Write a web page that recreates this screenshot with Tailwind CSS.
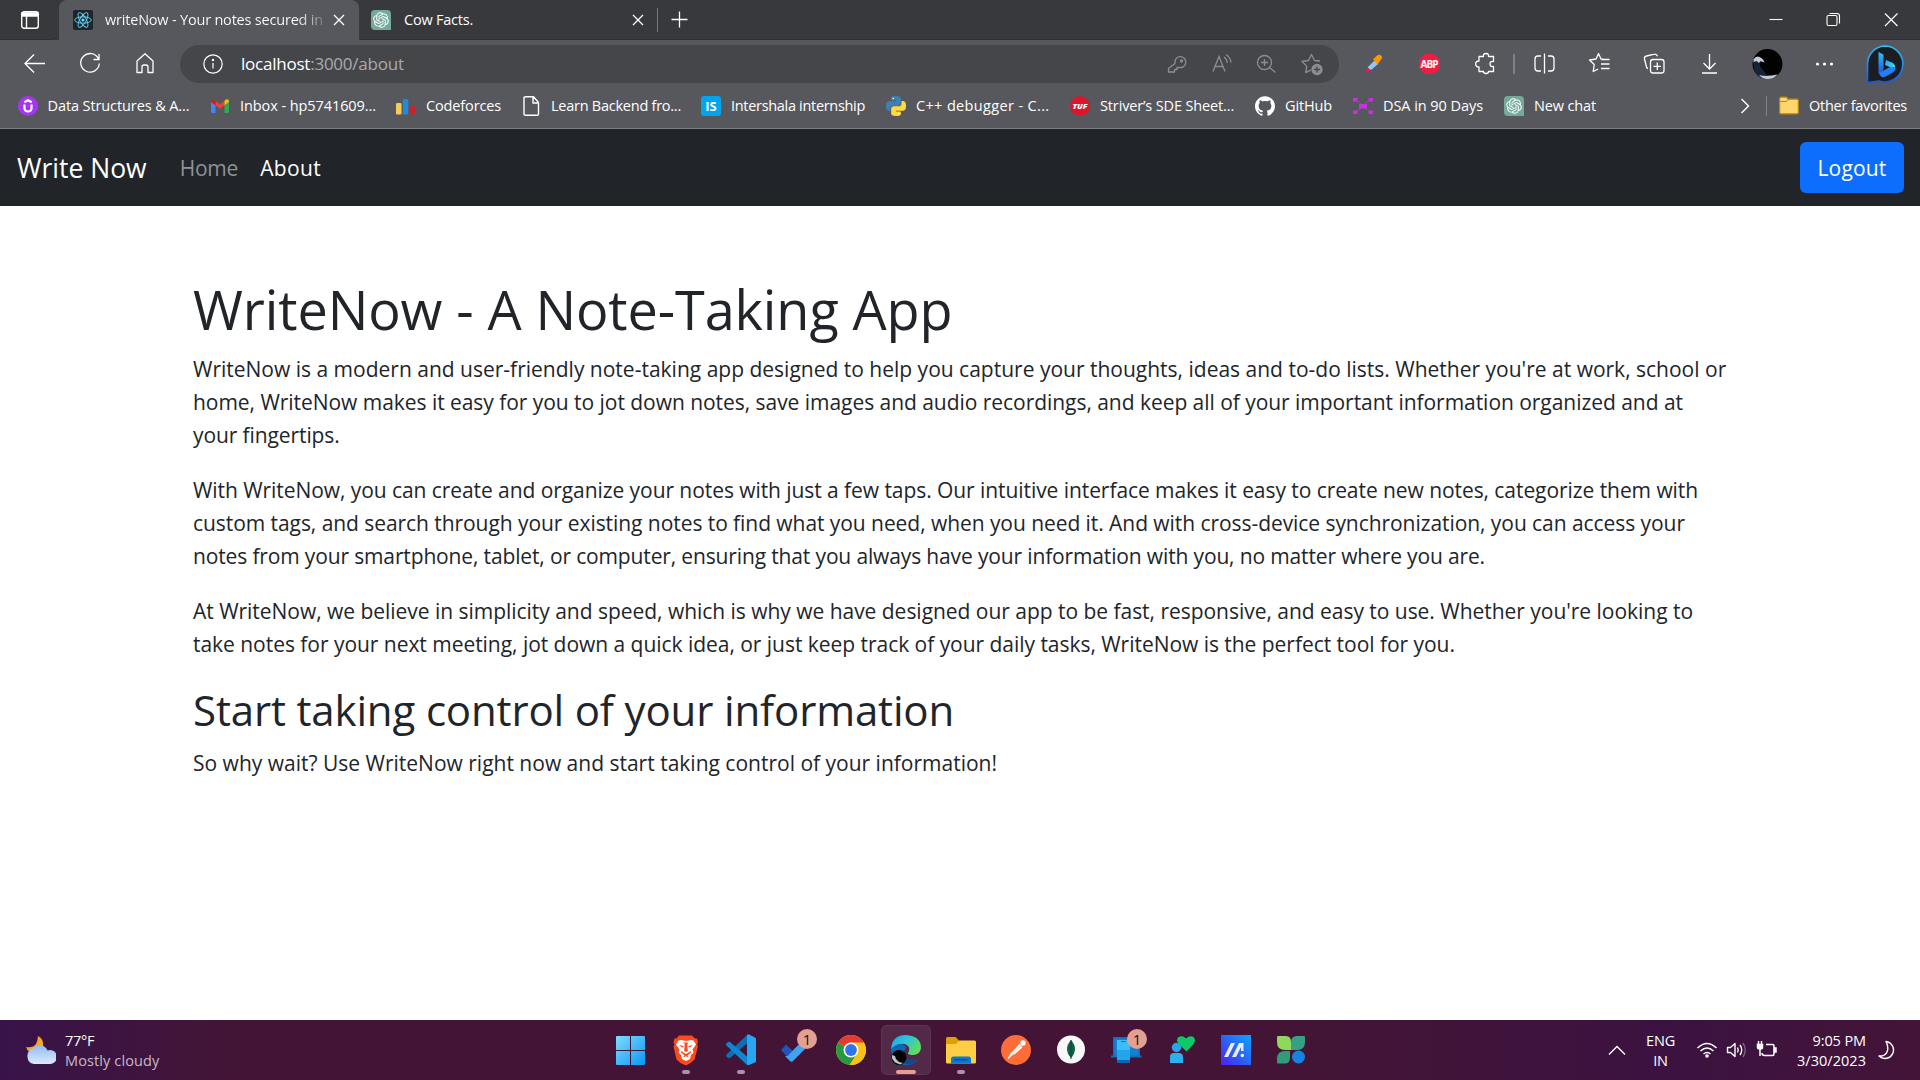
<!DOCTYPE html>
<html lang="en">
<head>
<meta charset="utf-8">
<title>writeNow - Your notes secured in the cloud</title>
<script src="https://cdn.jsdelivr.net/npm/@tailwindcss/browser@4"></script>
</head>
<body class="flex h-screen w-screen flex-col overflow-hidden bg-white font-['Open_Sans','Noto_Sans',sans-serif] text-[14.5px] text-white">

<svg class="hidden">
  <symbol id="gpt" viewBox="0 0 20 20">
    <path d="M4 0h12q4 0 4 4v16H4q-4 0-4-4V4q0-4 4-4z" fill="#74a99b"/>
    <path transform="translate(2.2 2.2) scale(.65)" fill="#fff" d="M22.2819 9.8211a5.9847 5.9847 0 0 0-.5157-4.9108 6.0462 6.0462 0 0 0-6.5098-2.9A6.0651 6.0651 0 0 0 4.9807 4.1818a5.9847 5.9847 0 0 0-3.9977 2.9 6.0462 6.0462 0 0 0 .7427 7.0966 5.98 5.98 0 0 0 .511 4.9107 6.051 6.051 0 0 0 6.5146 2.9001A5.9847 5.9847 0 0 0 13.2599 24a6.0557 6.0557 0 0 0 5.7718-4.2058 5.9894 5.9894 0 0 0 3.9977-2.9001 6.0557 6.0557 0 0 0-.7475-7.0729zm-9.022 12.6081a4.4755 4.4755 0 0 1-2.8764-1.0408l.1419-.0804 4.7783-2.7582a.7948.7948 0 0 0 .3927-.6813v-6.7369l2.02 1.1686a.071.071 0 0 1 .038.052v5.5826a4.504 4.504 0 0 1-4.4945 4.4944zm-9.6607-4.1254a4.4708 4.4708 0 0 1-.5346-3.0137l.142.0852 4.783 2.7582a.7712.7712 0 0 0 .7806 0l5.8428-3.3685v2.3324a.0804.0804 0 0 1-.0332.0615L9.74 19.9502a4.4992 4.4992 0 0 1-6.1408-1.6464zM2.3408 7.8956a4.485 4.485 0 0 1 2.3655-1.9728V11.6a.7664.7664 0 0 0 .3879.6765l5.8144 3.3543-2.0201 1.1685a.0757.0757 0 0 1-.071 0l-4.8303-2.7865A4.504 4.504 0 0 1 2.3408 7.872zm16.5963 3.8558L13.1038 8.364 15.1192 7.2a.0757.0757 0 0 1 .071 0l4.8303 2.7913a4.4944 4.4944 0 0 1-.6765 8.1042v-5.6772a.79.79 0 0 0-.407-.667zm2.0107-3.0231l-.142-.0852-4.7735-2.7818a.7759.7759 0 0 0-.7854 0L9.409 9.2297V6.8974a.0662.0662 0 0 1 .0284-.0615l4.8303-2.7866a4.4992 4.4992 0 0 1 6.6802 4.66zM8.3065 12.863l-2.02-1.1638a.0804.0804 0 0 1-.038-.0567V6.0742a4.4992 4.4992 0 0 1 7.3757-3.4537l-.142.0805L8.704 5.459a.7948.7948 0 0 0-.3927.6813zm1.0976-2.3654l2.602-1.4998 2.6069 1.4998v2.9994l-2.5974 1.4997-2.6067-1.4997Z"/>
  </symbol>
</svg>

<!-- Tab strip -->
<header class="flex h-10 shrink-0 items-center bg-[#38393c]">
  <div class="flex h-10 w-[59px] shrink-0 items-center justify-center rounded-br-lg border-b border-[#2e2f32]">
    <svg class="size-5" viewBox="0 0 20 20" fill="none" stroke="#fff" stroke-width="1.4"><rect x="1.7" y="1.7" width="16.6" height="16.6" rx="2.5"/><path d="M2 3h16v3H2z" fill="#fff"/><path d="M6.5 6v12"/></svg>
  </div>
  <div class="flex h-10 w-[300px] shrink-0 items-center rounded-t-lg bg-[#57585d] pl-[14px]">
    <svg class="size-5 shrink-0" viewBox="0 0 20 20"><rect width="20" height="20" rx="2" fill="#20232a"/><g fill="none" stroke="#61dafb" stroke-width=".9"><ellipse cx="10" cy="10" rx="8.3" ry="3.2"/><ellipse cx="10" cy="10" rx="8.3" ry="3.2" transform="rotate(60 10 10)"/><ellipse cx="10" cy="10" rx="8.3" ry="3.2" transform="rotate(120 10 10)"/></g><circle cx="10" cy="10" r="1.6" fill="#61dafb"/></svg>
    <span class="ml-3 w-[219px] overflow-hidden whitespace-nowrap bg-linear-to-r from-white from-88% to-white/20 bg-clip-text tracking-[-0.2px] text-transparent">writeNow - Your notes secured in</span>
    <svg class="ml-[9px] size-3 shrink-0" viewBox="0 0 12 12" stroke="#fff" stroke-width="1.3"><path d="M1 1l10 10M11 1L1 11"/></svg>
  </div>
  <div class="flex h-10 w-[298px] shrink-0 items-center border-b border-[#2e2f32] pl-3">
    <svg class="size-5 shrink-0"><use href="#gpt"/></svg>
    <span class="ml-[13px] flex-1 tracking-[-0.22px]">Cow Facts.</span>
    <svg class="mr-[13px] size-3" viewBox="0 0 12 12" stroke="#fff" stroke-width="1.3"><path d="M1 1l10 10M11 1L1 11"/></svg>
  </div>
  <div class="flex h-10 flex-1 items-center border-b border-[#2e2f32]">
    <div class="h-6 w-px bg-[#77787b]"></div>
    <svg class="ml-[13px] size-[17px]" viewBox="0 0 17 17" stroke="#fff" stroke-width="1.3"><path d="M8.5 .5v16M.5 8.5h16"/></svg>
    <div class="ml-auto flex text-white">
      <svg class="h-10 w-[57px]" viewBox="0 0 57 40" stroke="#fff" stroke-width="1.1"><path d="M21.5 19.5h13"/></svg>
      <svg class="h-10 w-[58px]" viewBox="0 0 58 40" fill="none" stroke="#fff" stroke-width="1.1"><rect x="22" y="15.5" width="10" height="10" rx="1.5"/><path d="M24.5 13.5h7.500q2.500 0 2.500 2.500v7.500"/></svg>
      <svg class="h-10 w-[57px]" viewBox="0 0 57 40" stroke="#fff" stroke-width="1.2"><path d="M22 13.500l12.500 12.500M34.500 13.500L22 26"/></svg>
    </div>
  </div>
</header>

<!-- Toolbar -->
<div class="flex h-12 shrink-0 items-center bg-[#57585d] pl-2">
  <svg class="h-12 w-[55px] shrink-0" viewBox="0 0 55 48" fill="none" stroke="#fff" stroke-width="1.3"><path d="M37 23.500H17.500M26 14.500l-9 9 9 9"/></svg>
  <svg class="h-12 w-[55px] shrink-0" viewBox="0 0 55 48" fill="none" stroke="#fff" stroke-width="1.3"><path d="M35.500 19A9.300 9.300 0 1 0 36.300 23.500M36 14v5.500h-5.500"/></svg>
  <svg class="h-12 w-[55px] shrink-0" viewBox="0 0 55 48" fill="none" stroke="#fff" stroke-width="1.3" stroke-linejoin="round"><path d="M19 21l8-7.300L35 21v11.500h-5V27q0-2-2-2h-2q-2 0-2 2v5.500h-5z"/></svg>
  <div class="ml-[7px] flex h-[38px] w-[1159px] shrink-0 items-center rounded-full bg-[#45464a] pl-[23px] pr-[7px]">
    <svg class="size-5" viewBox="0 0 20 20" fill="none" stroke="#fff" stroke-width="1.2"><circle cx="10" cy="10" r="9.200"/><path d="M10 9v5.500"/><circle cx="10" cy="6" r=".6" fill="#fff"/></svg>
    <span class="ml-[18px] flex-1 text-[17px] tracking-[-0.23px] text-[#a9aaac]"><span class="text-white">localhost</span>:3000/about</span>
    <svg class="h-8 w-[45px]" viewBox="0 0 45 32" fill="none" stroke="#8d8e91" stroke-width="1.3" stroke-linejoin="round"><path d="M21 15.500a5.500 5.500 0 1 1 4 4l-2 0v2h-2.500v2.500H14.500v-3.500z"/><circle cx="27.500" cy="13" r="1"/></svg>
    <svg class="h-8 w-[45px]" viewBox="0 0 45 32" fill="none" stroke="#8d8e91" stroke-width="1.3"><path d="M14 23.500l6-15 6 15M16 18.500h8M25 9q3 2 3.200 6M27 6.500q4.500 3 5 8"/></svg>
    <svg class="h-8 w-[45px]" viewBox="0 0 45 32" fill="none" stroke="#8d8e91" stroke-width="1.3"><circle cx="20.500" cy="14.500" r="7"/><path d="M25.500 19.500l6 5M17 14.500h7M20.500 11v7"/></svg>
    <svg class="h-8 w-[43px]" viewBox="0 0 43 32" fill="none" stroke="#8d8e91" stroke-width="1.3" stroke-linejoin="round"><path d="M31 13l-5.500-.5L22.500 6.500l-3 6-6.500 1 4.700 4.600-1 6.500 5.300-2.700"/><circle cx="28" cy="21.500" r="5" fill="#8d8e91"/><path d="M25 21.500h6M28 18.500v6" stroke="#45464a"/></svg>
  </div>
  <svg class="ml-2 h-12 w-[55px] shrink-0" viewBox="0 0 55 48"><g transform="translate(0 1)"><path d="M18.500 31.500l2.500-6 3 3-4 3z" fill="#e6175c"/><path d="M20.500 26.500l7-7 3.500 3.500-7 6z" fill="#90c8f5"/><path d="M20.500 26.500l3.500 3.500-4.500 1.500z" fill="#e6175c"/><path d="M26 18l1.500-1 2-2q3-2.500 5 0 1.500 2-1 4l-1.500 2.500-1.500 2z" fill="#ff9800"/></g></svg>
  <svg class="h-12 w-[55px] shrink-0" viewBox="0 0 55 48"><path d="M23 14h9l5.500 5.500v9L32 34h-9L17.500 28.500v-9z" fill="#ed1e45"/><text x="27.500" y="27.800" text-anchor="middle" font-size="10" font-weight="700" fill="#fff" textLength="18">ABP</text></svg>
  <svg class="h-12 w-[56px] shrink-0" viewBox="0 0 56 48" fill="none" stroke="#fff" stroke-width="1.3" stroke-linejoin="round"><path d="M22 16.500h4.500q-.5-3 2.500-3t2.500 3H36.500v5q-3.500-.5-3.500 2.500t3.500 2.500V31.500H31.500q0 2-2.500 2t-2.500-2H22V27q-3.300 0-3.300-3t3.300-3z"/></svg>
  <div class="h-5 w-0.5 shrink-0 bg-[#808184]"></div>
  <svg class="ml-0.5 h-12 w-[55px] shrink-0" viewBox="0 0 55 48" fill="none" stroke="#fff" stroke-width="1.3"><path d="M24 16h-3q-3 0-3 3v9q0 3 3 3h3M31 16h3q3 0 3 3v9q0 3-3 3h-3M27.500 13.500v20"/></svg>
  <svg class="h-12 w-[55px] shrink-0" viewBox="0 0 55 48" fill="none" stroke="#fff" stroke-width="1.3" stroke-linejoin="round"><path d="M32 19.500l-3-.5-2.500-5.500L24 19l-6.500 1 4.700 4.500-1 7 5-2.500M29.500 19.500H37.500M29 24h8.500M29 28.500h8.500"/></svg>
  <svg class="h-12 w-[55px] shrink-0" viewBox="0 0 55 48" fill="none" stroke="#fff" stroke-width="1.3" stroke-linejoin="round"><rect x="23.500" y="19.500" width="13.500" height="13.500" rx="2.500"/><path d="M30.300 22.500v7.500M26.500 26.300h7.500M21 28.500q-1 0-1.500-1.500L17.500 19q-.5-2.500 2-3l8-1.800q2-.5 3 2"/></svg>
  <svg class="h-12 w-[55px] shrink-0" viewBox="0 0 55 48" fill="none" stroke="#fff" stroke-width="1.3"><path d="M27.500 14v15M21.500 23l6 6 6-6M20 33h15"/></svg>
  <svg class="ml-[3px] h-12 w-[55px] shrink-0" viewBox="0 0 55 48"><circle cx="27.500" cy="24" r="15" fill="#020203"/><path d="M13 21q3-5 6-3.500 4 2 3.500 5-2-1-3 1 1 5 4 7l3 4q6 2 11-.500-4 5-10 5-9 0-13-8-1-4-1.500-10z" fill="#17233b"/><path d="M13.500 19.500q2.500-4 6-2.500 4 1.500 5 5.500l-4-1.500-1.500 2-2.500-2-3 1zM19 35q8 2 18.500-.500-4 4.500-10 4.500-5 0-8.500-4z" fill="#c3ccd4"/></svg>
  <svg class="ml-0.5 h-12 w-[55px] shrink-0" viewBox="0 0 55 48" fill="#fff"><circle cx="20.500" cy="24" r="1.600"/><circle cx="27.500" cy="24" r="1.600"/><circle cx="34.500" cy="24" r="1.600"/></svg>
  <svg class="ml-[5px] h-12 w-[55px] shrink-0" viewBox="0 0 55 48"><defs><linearGradient id="bg1" x1="0" y1="0" x2="0" y2="1"><stop offset="0" stop-color="#2fc0f2"/><stop offset="1" stop-color="#1d55dd"/></linearGradient><linearGradient id="bg2" x1="0" y1="0" x2="1" y2="1"><stop offset="0" stop-color="#22a5fa"/><stop offset="1" stop-color="#3fe0e4"/></linearGradient></defs><path d="M28.500 6a18 18 0 1 1-6.500 35q-6 1-11.500 1.500V24A18 18 0 0 1 28.500 6z" fill="#1b1d22" stroke="url(#bg1)" stroke-width="1.700"/><path d="M21.500 12l5 2.500v15.500l-4.500 4q-.5 0-.5-4z" fill="url(#bg1)"/><path d="M29 20l7 3q3 2 2 6l-10-4z" fill="url(#bg2)"/><path d="M22 33l11-6 5 0q1 4-3 6l-7.500 4q-4 1-5.500-4z" fill="#237ff3"/></svg>
</div>

<!-- Favourites bar -->
<div class="flex h-[41px] shrink-0 items-center whitespace-nowrap border-b border-[#7d7e81] bg-[#57585d] pb-1 pl-[18px]">
  <div class="flex w-48 shrink-0 items-center gap-[9.5px]">
    <svg class="size-5" viewBox="0 0 20 20"><circle cx="10" cy="10" r="10" fill="#a435f0"/><path d="M6.500 8.500v4a3.500 3 0 0 0 7 0v-4M6.300 6.300L10 4.200l3.700 2.100" fill="none" stroke="#fff" stroke-width="2.200"/></svg>
    <span class="tracking-[-0.1px]">Data Structures &amp; A...</span>
  </div>
  <div class="flex w-[185px] shrink-0 items-center gap-2.5">
    <svg class="size-5" viewBox="0 0 20 20"><path d="M1 5.500l4.500 3.300V17H2.500Q1 17 1 15.500z" fill="#4285f4"/><path d="M19 5.500l-4.500 3.300V17h3q1.500 0 1.500-1.500z" fill="#34a853"/><path d="M5.500 4.800L10 8.300l4.500-3.500v4.500L10 12.800 5.500 9.300z" fill="#ea4335"/><path d="M1 5.700Q1 3 3.500 3.300l2 1.500v4.500L1 6z" fill="#c5221f"/><path d="M19 5.700Q19 3 16.500 3.300l-2 1.500v4.500L19 6z" fill="#fbbc04"/></svg>
    <span class="tracking-[-0.08px]">Inbox - hp5741609...</span>
  </div>
  <div class="flex w-[127px] shrink-0 items-center gap-[11px]">
    <svg class="size-5" viewBox="0 0 20 20"><rect x="1" y="7" width="5.500" height="11.500" rx="1.200" fill="#f9cb52"/><rect x="7.800" y="3" width="5.500" height="15.500" rx="1.200" fill="#1f8dd6"/><rect x="14.600" y="9.500" width="5.400" height="9" rx="1.200" fill="#c62430"/></svg>
    <span class="tracking-[-0.14px]">Codeforces</span>
  </div>
  <div class="flex w-[179px] shrink-0 items-center gap-[9px]">
    <svg class="size-5" viewBox="0 0 20 20" fill="none" stroke="#fff" stroke-width="1.4" stroke-linejoin="round"><path d="M4 .8h7.500L16.500 6.500V18q0 1.300-1.300 1.300H3.500Q2 19.300 2 18V2Q2 .8 3.500 .8zM11 1v6h5.500"/></svg>
    <span class="tracking-[-0.25px]">Learn Backend fro...</span>
  </div>
  <div class="flex w-[185px] shrink-0 items-center gap-2.5">
    <svg class="size-5" viewBox="0 0 20 20"><rect width="20" height="20" rx="3" fill="#00a5ec"/><text x="10" y="15" text-anchor="middle" font-size="13" font-weight="700" fill="#fff">IS</text></svg>
    <span class="tracking-[-0.31px]">Intershala internship</span>
  </div>
  <div class="flex w-[184px] shrink-0 items-center gap-2.5">
    <svg class="size-5" viewBox="0 0 24 24"><path fill="#3d7fb5" d="M14.250.18l.9.2.73.26.59.3.45.32.34.34.25.34.16.33.1.3.04.26.02.2-.01.13V8.500l-.05.63-.13.55-.21.46-.26.38-.3.31-.33.25-.35.19-.35.14-.33.1-.3.07-.26.04-.21.02H8.770l-.69.05-.59.14-.5.22-.41.27-.33.32-.27.35-.2.36-.15.37-.1.35-.07.32-.04.27-.02.21v3.060H3.170l-.21-.03-.28-.07-.32-.12-.35-.18-.36-.26-.36-.36-.35-.46-.32-.59-.28-.73-.21-.88-.14-1.050-.05-1.230.06-1.220.16-1.040.24-.87.32-.71.36-.57.4-.44.42-.33.42-.24.4-.16.36-.1.32-.05.24-.01h.16l.06.01h8.160v-.83H6.180l-.01-2.750-.02-.37.05-.34.11-.31.17-.28.25-.26.31-.23.38-.2.44-.18.51-.15.58-.12.64-.1.71-.06.77-.04.84-.02 1.270.05z"/><path transform="rotate(180 12 12)" fill="#ffd83f" d="M14.250.18l.9.2.73.26.59.3.45.32.34.34.25.34.16.33.1.3.04.26.02.2-.01.13V8.500l-.05.63-.13.55-.21.46-.26.38-.3.31-.33.25-.35.19-.35.14-.33.1-.3.07-.26.04-.21.02H8.770l-.69.05-.59.14-.5.22-.41.27-.33.32-.27.35-.2.36-.15.37-.1.35-.07.32-.04.27-.02.21v3.060H3.170l-.21-.03-.28-.07-.32-.12-.35-.18-.36-.26-.36-.36-.35-.46-.32-.59-.28-.73-.21-.88-.14-1.050-.05-1.230.06-1.220.16-1.040.24-.87.32-.71.36-.57.4-.44.42-.33.42-.24.4-.16.36-.1.32-.05.24-.01h.16l.06.01h8.160v-.83H6.180l-.01-2.750-.02-.37.05-.34.11-.31.17-.28.25-.26.31-.23.38-.2.44-.18.51-.15.58-.12.64-.1.71-.06.77-.04.84-.02 1.270.05z"/><circle cx="8.700" cy="3" r="1" fill="#fff"/><circle cx="15.300" cy="21" r="1" fill="#fff"/></svg>
    <span class="tracking-[0.35px]">C++ debugger - C...</span>
  </div>
  <div class="flex w-[185px] shrink-0 items-center gap-2.5">
    <svg class="size-5" viewBox="0 0 20 20"><circle cx="10" cy="10" r="10" fill="#d9162b"/><text x="10" y="12.800" text-anchor="middle" font-size="7.500" font-weight="800" font-style="italic" fill="#fff" textLength="15" lengthAdjust="spacingAndGlyphs">TUF</text></svg>
    <span class="tracking-[-0.14px]">Striver’s SDE Sheet...</span>
  </div>
  <div class="flex w-[98px] shrink-0 items-center gap-2.5">
    <svg class="size-5" viewBox="0 0 24 24" fill="#fff"><path d="M12 .297c-6.630 0-12 5.373-12 12 0 5.303 3.438 9.800 8.205 11.385.6.113.82-.258.82-.577 0-.285-.01-1.040-.015-2.040-3.338.724-4.042-1.610-4.042-1.610C4.422 18.070 3.633 17.700 3.633 17.700c-1.087-.744.084-.729.084-.729 1.205.084 1.838 1.236 1.838 1.236 1.070 1.835 2.809 1.305 3.495.998.108-.776.417-1.305.76-1.605-2.665-.3-5.466-1.332-5.466-5.930 0-1.310.465-2.380 1.235-3.220-.135-.303-.54-1.523.105-3.176 0 0 1.005-.322 3.300 1.230.96-.267 1.980-.399 3-.405 1.020.006 2.040.138 3 .405 2.280-1.552 3.285-1.230 3.285-1.230.645 1.653.24 2.873.12 3.176.765.84 1.230 1.910 1.230 3.220 0 4.610-2.805 5.625-5.475 5.920.42.36.81 1.096.81 2.220 0 1.606-.015 2.896-.015 3.286 0 .315.21.69.825.57C20.565 22.092 24 17.592 24 12.297c0-6.627-5.373-12-12-12"/></svg>
    <span class="tracking-[-0.14px]">GitHub</span>
  </div>
  <div class="flex w-[151px] shrink-0 items-center gap-2.5">
    <svg class="size-5" viewBox="0 0 20 20"><path d="M2 4q4 1 8 6t8 6M18 4q-4 1-8 6t-8 6" fill="none" stroke="#8c4a9e" stroke-width="1"/><g fill="#c931df"><rect x="0" y="2" width="4.500" height="3.500"/><rect x="15.500" y="2" width="4.500" height="3.500"/><rect x="0" y="14.500" width="4.500" height="3.500"/><rect x="15.500" y="14.500" width="4.500" height="3.500"/><rect x="6" y="8" width="8" height="4.500"/></g></svg>
    <span class="tracking-[-0.06px]">DSA in 90 Days</span>
  </div>
  <div class="flex shrink-0 items-center gap-2.5">
    <svg class="size-5"><use href="#gpt"/></svg>
    <span class="tracking-[-0.14px]">New chat</span>
  </div>
  <div class="ml-auto flex items-center pr-[13px]">
    <svg class="h-4 w-2.5" viewBox="0 0 10 16" fill="none" stroke="#fff" stroke-width="1.400"><path d="M1.500 1l7 7-7 7"/></svg>
    <div class="ml-4 h-5 w-px bg-[#808184]"></div>
    <svg class="ml-3 size-5" viewBox="0 0 20 20"><path d="M.7 4V2.500Q.7 1.200 2 1.200h5.500l1.500 2H18q1.300 0 1.300 1.300v12q0 1.300-1.300 1.300H2Q.7 17.800.7 16.500z" fill="#ffd66b" stroke="#b98a16" stroke-width="1.200"/><path d="M1 5.500h6.500l1.500-2" fill="none" stroke="#b98a16"/></svg>
    <span class="ml-2.5 tracking-[-0.26px]">Other favorites</span>
  </div>
</div>

<!-- Site navbar -->
<nav class="flex h-[77px] shrink-0 items-center bg-[#212529] pl-[17px] pr-4 text-[21px]">
  <a class="pt-0.5 text-[26.5px]">Write Now</a>
  <a class="ml-[33px] pt-0.5 tracking-[-0.2px] text-[#909294]">Home</a>
  <a class="ml-[22px] pt-0.5 tracking-[0.37px]">About</a>
  <button class="ml-auto h-[51px] w-[104px] rounded-md bg-[#0d6efd] pt-0.5 tracking-[0.17px]">Logout</button>
</nav>

<!-- Page -->
<main class="flex-1 whitespace-nowrap pl-[193px] pt-[70px] text-[21px] leading-[33px] text-[#212529]">
  <h1 class="mb-[11px] text-[54px] leading-[66px] tracking-[-0.1px]">WriteNow - A Note-Taking App</h1>
  <p class="mb-[22px]">
    <span class="block">WriteNow is a modern and user-friendly note-taking app designed to help you capture your thoughts, ideas and to-do lists. Whether you're at work, school or</span>
    <span class="block tracking-[-0.042px]">home, WriteNow makes it easy for you to jot down notes, save images and audio recordings, and keep all of your important information organized and at</span>
    <span class="block tracking-[-0.1px]">your fingertips.</span>
  </p>
  <p class="mb-[22px]">
    <span class="block tracking-[-0.066px]">With WriteNow, you can create and organize your notes with just a few taps. Our intuitive interface makes it easy to create new notes, categorize them with</span>
    <span class="block tracking-[-0.06px]">custom tags, and search through your existing notes to find what you need, when you need it. And with cross-device synchronization, you can access your</span>
    <span class="block tracking-[-0.143px]">notes from your smartphone, tablet, or computer, ensuring that you always have your information with you, no matter where you are.</span>
  </p>
  <p class="mb-[22px]">
    <span class="block tracking-[-0.03px]">At WriteNow, we believe in simplicity and speed, which is why we have designed our app to be fast, responsive, and easy to use. Whether you're looking to</span>
    <span class="block tracking-[-0.035px]">take notes for your next meeting, jot down a quick idea, or just keep track of your daily tasks, WriteNow is the perfect tool for you.</span>
  </p>
  <h2 class="mb-[11px] text-[42px] leading-[53px] tracking-[-0.15px]">Start taking control of your information</h2>
  <p>So why wait? Use WriteNow right now and start taking control of your information!</p>
</main>

<!-- Taskbar -->
<footer class="flex h-[60px] shrink-0 items-center bg-linear-to-r from-[#38134a] via-[#431436] via-12% to-[#431436] leading-5">
  <div class="flex w-[603px] items-center pl-[25px]">
    <svg class="size-[31px]" viewBox="0 0 31 31"><defs><linearGradient id="cl" x1="0" y1="0" x2="0" y2="1"><stop offset="0" stop-color="#8fbdf5"/><stop offset="1" stop-color="#dde9fb"/></linearGradient></defs><path d="M13 1q6 3 5 10T9 18Q3 18 1 12q7 1 10-3 2-4 2-8z" fill="#f5a42c"/><path d="M9 29a8 8 0 0 1-1-15.500 8.500 8.500 0 0 1 14.500 2A7 7 0 1 1 24 29z" fill="url(#cl)"/></svg>
    <div class="ml-[9px] pt-0.5"><div class="tracking-[-0.3px]">77°F</div><div class="tracking-[0.12px] text-[#c9b9c8]">Mostly cloudy</div></div>
  </div>
  <div class="flex h-[60px] flex-1 items-center">
    <svg class="h-[60px] w-[55px]" viewBox="0 0 55 60"><defs><linearGradient id="wn" x1="0" y1="0" x2="1" y2="1"><stop offset="0" stop-color="#7fdcff"/><stop offset="1" stop-color="#0a96f5"/></linearGradient></defs><path d="M13 17q0-1 1-1h13v14H13zM28 16h13q1 0 1 1v13H28zM13 31h14v14H14q-1 0-1-1zM28 31h14v13q0 1-1 1H28z" fill="url(#wn)"/></svg>
    <svg class="h-[60px] w-[55px]" viewBox="0 0 55 60"><path d="M21 15.500h13l3 3h2l1 4-1 2 1 2-3.500 13-4 3.500L28 45.500 22.500 43l-4-3.500L15.500 26.500l1-2-1-2 1-4h2z" fill="#fb4b1c"/><path d="M20.500 20.500l3-.5 4.500 1 4.500-1 3 .5 2.500 4-3.500 5 1 3-2.500 2.500-1 4-4 2-4-2-1-4-2.500-2.500 1-3-3.500-5z" fill="#fff"/><path d="M21 25l4.500 1v1.500l-2-.5zM35 25l-4.500 1v1.500l2-.5zM25.500 22.500h5l-1.200 1.500.5 7L28 32l-1.800-1 .5-7zM23 31l5 3 5-3v1.500l-3.500 3L31 37.500l-3-1.200-3 1.200 1.500-2-3.500-3z" fill="#fb4b1c"/><rect x="24" y="50" width="8" height="4" rx="2" fill="#a992ad"/></svg>
    <svg class="h-[60px] w-[55px]" viewBox="0 0 55 60"><g transform="translate(-1 0)"><path d="M35 15v8.500L18 38q-1 .5-2 0l-1.500-1.500q-.7-1 0-2z" fill="#0a70b5"/><path d="M35 45v-8.500L18 22q-1-.5-2 0l-1.500 1.500q-.7 1 0 2z" fill="#0f87d0"/><path d="M35 15q1-1 2-.5l6 3q1 .5 1 1.500v22q0 1-1 1.500l-6 2.500q-1 .3-2-.5z" fill="#28a5f3"/><rect x="25" y="50" width="8" height="4" rx="2" fill="#a992ad"/></g></svg>
    <svg class="h-[60px] w-[55px]" viewBox="0 0 55 60"><path d="M13 30l5-5.500 9 8.500-4.500 7.500z" fill="#1a56bd"/><path d="M19.500 36L37 18l6 5-18.500 18.500q-1 .7-2 0L17 36z" fill="#41a2f0"/><circle cx="39" cy="19" r="10" fill="#e3a090"/><text x="39" y="24.500" text-anchor="middle" font-size="15" fill="#1a1015">1</text></svg>
    <svg class="h-[60px] w-[55px]" viewBox="0 0 55 60"><circle cx="28" cy="30" r="15" fill="#fbc116"/><path d="M28 30L15 22.500a15 15 0 0 1 26 0z" fill="#e33b2e"/><path d="M15 22.500a15 15 0 0 0 11.500 22.400L34 33.500 28 30z" fill="#269a42"/><path d="M28 22.500h13a15 15 0 0 1-14.500 22.400L34.500 34z" fill="#fbc116"/><circle cx="28" cy="30" r="7.500" fill="#fff"/><circle cx="28" cy="30" r="5.900" fill="#2f74ea"/></svg>
    <svg class="h-[60px] w-[55px]" viewBox="0 0 55 60"><defs><linearGradient id="eg" x1="0" y1="0" x2="1" y2=".6"><stop offset="0" stop-color="#1ba0e8"/><stop offset=".5" stop-color="#31c5d8"/><stop offset="1" stop-color="#62dd5c"/></linearGradient></defs><rect x="3.500" y="5.500" width="49" height="49" rx="5" fill="#fff" fill-opacity=".09" stroke="#fff" stroke-opacity=".1"/><path d="M13 31q0-16 15-16 15 1 15 13-1 7-8 7-5 0-5-2 3-5-1-8-9-4-16 6z" fill="url(#eg)"/><path d="M13 29q7-7 13-4 2 1 2 3-4 5 0 10 5 5 12 2-5 6-13 5Q14 44 13 29z" fill="#0d68ba"/><path d="M28 29q-3 4 1 9 5 4 12 1-5 7-13 5-6-2-5-9 1-5 5-6z" fill="#114a8b"/><circle cx="21" cy="37.500" r="7.500" fill="#020203"/><path d="M14 35l3 1 1 3 3 3 4 1-3 1.500-5-2-3-4z" fill="#bac2ca"/><rect x="18" y="50" width="20" height="4" rx="2" fill="#e3a090"/></svg>
    <svg class="h-[60px] w-[55px]" viewBox="0 0 55 60"><path d="M13 18.500q0-1.500 1.500-1.500h8l3.500 3.500V26H13z" fill="#dfa007"/><path d="M13 24h10l3-3.500h15.500q1.500 0 1.500 1.500v20q0 1.500-1.500 1.500h-27Q13 43.500 13 42z" fill="#fdcd43"/><path d="M18 43.500V39q0-2.500 2.500-2.500h15Q38 36.500 38 39v4.500z" fill="#0e78d0"/><path d="M21.500 39.800h13" stroke="#0a4d92" stroke-width="1.300"/><rect x="24" y="50" width="8" height="4" rx="2" fill="#a992ad"/></svg>
    <svg class="h-[60px] w-[55px]" viewBox="0 0 55 60"><circle cx="28" cy="30" r="15" fill="#ff6c37"/><circle cx="35" cy="23" r="2.700" fill="#fff"/><path d="M32 24l2.500 3-9 7.500-5.500 4.500 2.500-6z" fill="#fde3d9"/><path d="M32 24L20 38.500M34 27l-8 7" stroke="#fff" stroke-width="1.200"/></svg>
    <svg class="h-[60px] w-[55px]" viewBox="0 0 55 60"><circle cx="28" cy="29.500" r="14" fill="#f8f8f7"/><path d="M28 20q-8 9 0 18 8-9 0-18z" fill="#116149"/><path d="M28 20v19" stroke="#0a4636" stroke-width="1"/></svg>
    <svg class="h-[60px] w-[55px]" viewBox="0 0 55 60"><path d="M15 17h27v18.500h1.500v2H13v-2h2z" fill="#0f6fbd"/><path d="M16.500 18.500h24v17h-24z" fill="#1480d2"/><rect x="19" y="20" width="13" height="23" fill="#22a5ea"/><path d="M19 20h13v10H19z" fill="#3cbdf5"/><path d="M19 40h13v3H19z" fill="#0c65b0"/><path d="M23 21.500h5" stroke="#0f6fbd"/><circle cx="39" cy="19" r="10" fill="#e3a090"/><text x="39" y="24.500" text-anchor="middle" font-size="15" fill="#1a1015">1</text></svg>
    <svg class="h-[60px] w-[55px]" viewBox="0 0 55 60"><g transform="translate(-2.500 0)"><path d="M36 31.500l-8-8q-3-3.500 0-6.500 4-2 7.500 1.500 4-3.500 7.500-1.500 3 3 0 7z" fill="#0bcb69"/><circle cx="26" cy="27.500" r="4.700" fill="#2aa5ea"/><path d="M19.500 43v-6q0-4 4-4h5q4 0 4 4v6z" fill="#2db0ee"/></g></svg>
    <svg class="h-[60px] w-[55px]" viewBox="0 0 55 60"><defs><linearGradient id="mg" x1="1" y1="0" x2="0" y2="1"><stop offset="0" stop-color="#0ba7fb"/><stop offset="1" stop-color="#4b21f5"/></linearGradient></defs><rect x="13" y="15" width="30" height="30" fill="url(#mg)"/><path d="M16 37l7-14h4l-7 14zM24 37l7-14h4l-7 14zM33 23h2.500v8H33z" fill="#e8ecff"/><circle cx="34.300" cy="35.500" r="1.700" fill="#fff"/></svg>
    <svg class="h-[60px] w-[55px]" viewBox="0 0 55 60"><path d="M15 16h8q5 0 5 6v8h-6q-8 0-8-8v-5q0-1 1-1z" fill="#8cd95b"/><path d="M41 16h-7q-6 0-6 6v8h6q8 0 8-8v-5q0-1-1-1z" fill="#35a184"/><path d="M15 43.500h7q5 0 5-6V31h-5q-8 0-8 8v3.500q0 1 1 1z" fill="#2f9c78"/><circle cx="35.500" cy="37" r="6.500" fill="#1583e0"/></svg>
  </div>
  <div class="flex h-[60px] w-[602px] items-center justify-end bg-linear-to-r from-[#431436] via-[#3b1240] via-60% to-[#441438]">
    <svg class="h-3 w-[18px] shrink-0" viewBox="0 0 18 12" fill="none" stroke="#fff" stroke-width="1.300"><path d="M1 10.500L9 2.500l8 8"/></svg>
    <div class="ml-5 w-[29px] pt-0.5 text-center tracking-[-0.17px]">ENG<br>IN</div>
    <svg class="ml-[21px] h-5 w-[22px]" viewBox="0 0 22 20" fill="none" stroke="#fff" stroke-width="1.500"><path d="M1.500 8q9.500-9 19 0M4.500 11q6.500-6 13 0M7.500 14q3.500-3 7 0"/><circle cx="11" cy="16" r="1.800" fill="#fff" stroke="none"/></svg>
    <svg class="ml-2 h-5 w-[22px]" viewBox="0 0 22 20" fill="none" stroke="#fff" stroke-width="1.400" stroke-linejoin="round"><path d="M1.500 7.500h3L9 3.500v13l-4.500-4h-3zM11.500 7.500q1.500 2.500 0 5M14 5q3.500 5 0 10"/><path d="M17 3q4.500 7 0 14" stroke="#7c5f80"/></svg>
    <svg class="ml-2 h-5 w-[22px]" viewBox="0 0 22 20" fill="none" stroke="#fff" stroke-width="1.500"><path d="M10 4.500h6.500Q18 4.500 18 6v8q0 1.500-1.500 1.500H8.500Q6 15.500 6 13"/><path d="M18.500 8h1.500v4h-1.500z" fill="#fff"/><path d="M1.500 4.500h5V7.500Q6.500 9 4 9T1.500 7.500z" fill="#fff"/><path d="M2.500 1v3.500M5.500 1v3.500M4 9v7"/></svg>
    <div class="w-[88px] pt-px text-right"><div class="tracking-[-0.1px]">9:05 PM</div><div class="tracking-[0.03px]">3/30/2023</div></div>
    <svg class="ml-3 mr-[25px] h-5 w-[17px]" viewBox="0 0 17 20" fill="none" stroke="#fff" stroke-width="1.400" stroke-linejoin="round"><path d="M8 1.500a8.500 8.500 0 1 1-7 14.500q6 .5 8-4t-1-10.500z"/></svg>
  </div>
</footer>
</body>
</html>
